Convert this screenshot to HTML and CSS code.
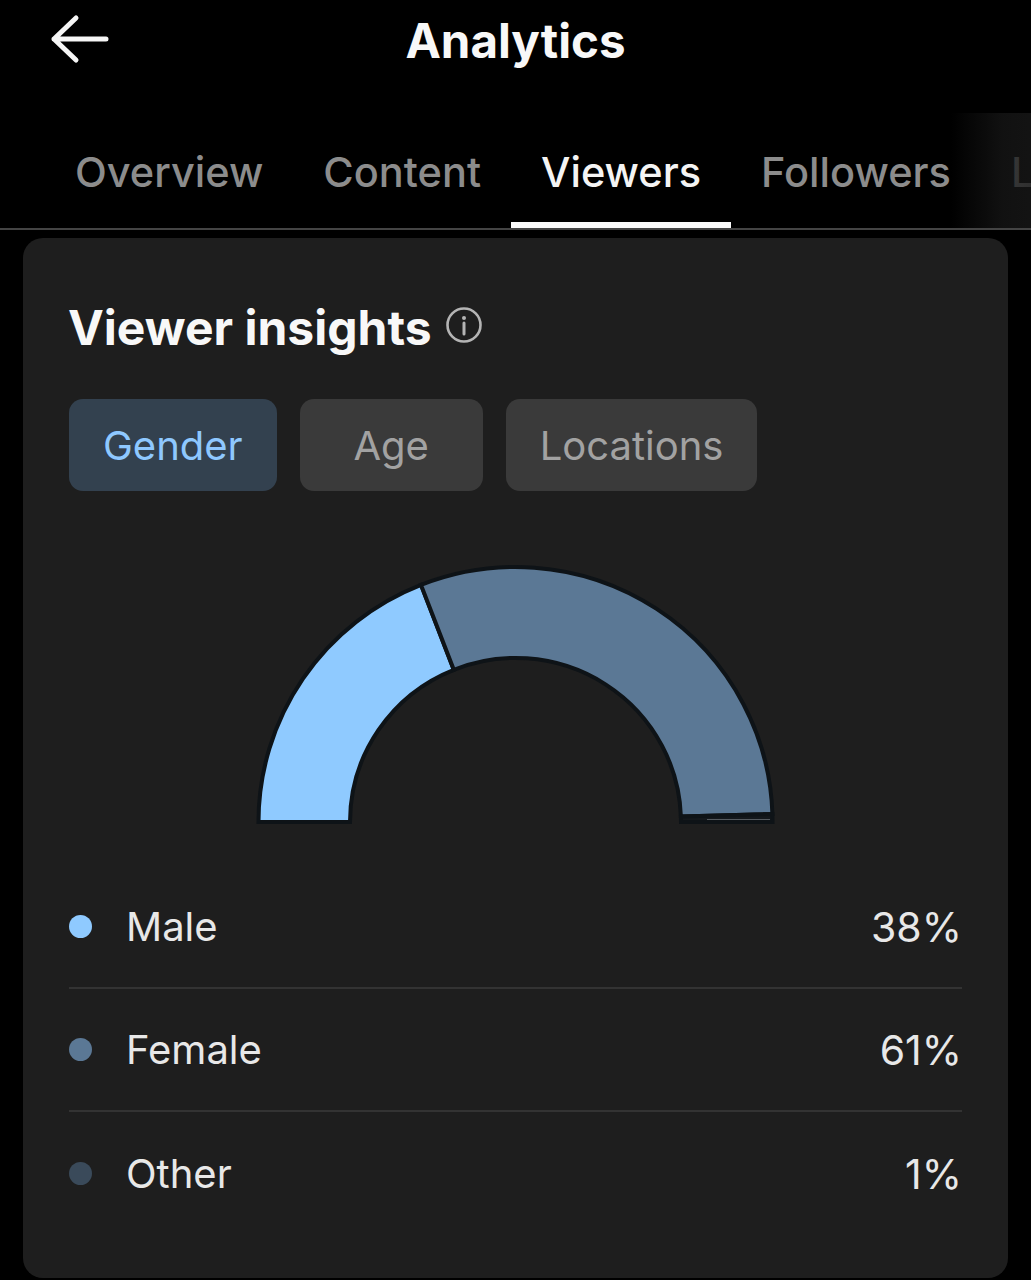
FILE: index.html
```html
<!DOCTYPE html>
<html lang="en">
<head>
<meta charset="utf-8">
<title>Analytics</title>
<link rel="stylesheet" href="styles.css">
</head>
<body>
<div class="screen">
  <header class="topbar">
    <svg class="back" viewBox="0 0 60 50" width="60" height="50" aria-hidden="true">
      <path d="M56 25H4M26 4L4 25l22 21" fill="none" stroke="#f6f6f6" stroke-width="5" stroke-linecap="round" stroke-linejoin="round"/>
    </svg>
    <h1 class="title">Analytics</h1>
  </header>
  <nav class="tabs">
    <span class="tab">Overview</span>
    <span class="tab">Content</span>
    <span class="tab active">Viewers</span>
    <span class="tab">Followers</span>
    <span class="tab last">L</span>
    <span class="fade"></span>
  </nav>
  <main class="card">
    <div class="heading">
      <h2 class="heading-text">Viewer insights</h2>
      <svg class="info" viewBox="0 0 36 36" width="36" height="36" aria-hidden="true">
        <circle cx="18" cy="18" r="16.5" fill="none" stroke="#b4b4b4" stroke-width="2.6"/>
        <circle cx="18" cy="11" r="2" fill="#b4b4b4"/>
        <path d="M18 16v11" stroke="#b4b4b4" stroke-width="3" stroke-linecap="round"/>
      </svg>
    </div>
    <div class="pills">
      <span class="pill selected">Gender</span>
      <span class="pill">Age</span>
      <span class="pill">Locations</span>
    </div>
    <svg class="gauge" viewBox="0 0 530 270" width="530" height="270" aria-hidden="true">
      <g stroke="#0e1317" stroke-width="4" stroke-linejoin="miter">
        <path d="M7.500 262A257 255 0 0 1 170 24.900L202.800 109.800A165.500 164 0 0 0 99 262Z" fill="#8fcaff"/>
        <path d="M170 24.900A257 255 0 0 1 521.400 254L429.900 256.500A165.500 164 0 0 0 202.800 109.800Z" fill="#5b7895"/>
        <path d="M429.900 256.500L521.400 254L521.500 262H430Z" fill="#14181c"/>
      </g>
      <path d="M456 259.500H519" stroke="#555a5f" stroke-width="1"/>
    </svg>
    <ul class="legend">
      <li class="row"><span class="dot male"></span><span class="label">Male</span><span class="value">38%</span></li>
      <li class="row"><span class="dot female"></span><span class="label">Female</span><span class="value">61%</span></li>
      <li class="row"><span class="dot other"></span><span class="label">Other</span><span class="value">1%</span></li>
    </ul>
  </main>
</div>
</body>
</html>
```
FILE: styles.css
```css
* { box-sizing: border-box; }
html, body { margin: 0; padding: 0; background: #000; }
body { font-family: Inter, "Liberation Sans", sans-serif; }
.screen { width: 1031px; height: 1280px; overflow: hidden; background: #000; }

.topbar { height: 113px; display: flex; justify-content: center; position: relative; }
.back { position: absolute; left: 50px; top: 14px; }
.title { margin: 16px 0 0; height: 50px; font-size: 47.500px; line-height: 50px; font-weight: 700; color: #f8f8f8; }

.tabs {
  height: 117px; display: flex; padding-left: 45px; position: relative; overflow: hidden;
  border-bottom: 2px solid #444;
}
.tab {
  flex: none; padding: 33px 30px 0; font-size: 41.500px; line-height: 52px; font-weight: 500; color: #8c8c8c;
  height: 115px; white-space: nowrap;
}
.tab.active { color: #f4f4f4; border-bottom: 6px solid #fafafa; }
.tab.last { padding-right: 0; }
.fade {
  position: absolute; right: 0; top: 0; bottom: 0; width: 80px;
  background: linear-gradient(to right, rgba(24,24,24,0), rgba(24,24,24,.72) 65%, rgba(24,24,24,.8));
}

.card {
  margin: 8px 23px 0; height: 1040px; background: #1e1e1e; border-radius: 20px;
  padding: 60px 46px 0;
}
.heading { display: flex; align-items: center; gap: 14px; height: 60px; }
.heading-text { margin: 0 0 0 -1px; font-size: 48px; line-height: 60px; font-weight: 700; color: #f8f8f8; }
.info { flex: none; margin-top: -6px; }

.pills { display: flex; gap: 23px; margin-top: 41px; }
.pill {
  height: 92px; min-width: 183px; padding: 0 34px; display: flex; align-items: center; justify-content: center;
  border-radius: 14px; background: #3a3a3a; color: #a2a2a2; font-size: 40px;
}
.pill.selected { background: #33414f; color: #8ec8ff; }

.gauge { display: block; margin: 69px 0 0 182px; }

.legend { list-style: none; margin: 36px 0 0; padding: 0; width: 893px; }
.row { height: 123px; display: flex; align-items: center; border-bottom: 2px solid #333; }
.row:last-child { border-bottom: 0; }
.dot { width: 23px; height: 23px; border-radius: 50%; flex: none; margin-right: 34px; }
.dot.male { background: #8fcaff; }
.dot.female { background: #5b7895; }
.dot.other { background: #3a4a5a; }
.label { flex: 1; font-size: 40px; color: #e8e8e8; }
.value { font-size: 41px; color: #e8e8e8; }
```
